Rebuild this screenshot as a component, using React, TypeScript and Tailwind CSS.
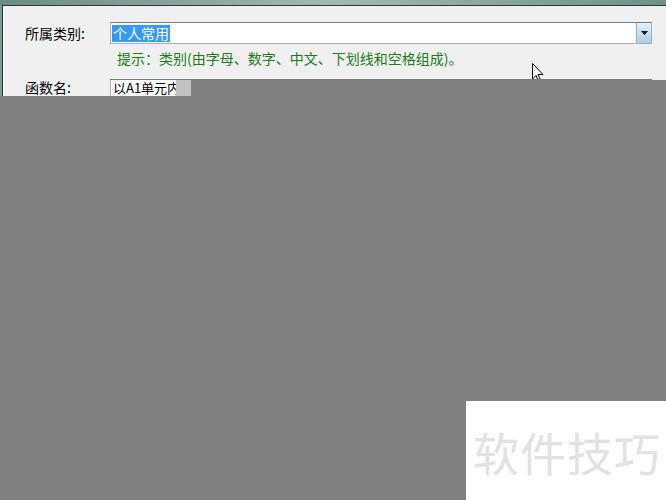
const cjk = { fontFamily: '"Noto Sans CJK SC", "Noto Sans", sans-serif' }

// mouse pointer, partly hidden behind the masked area below
function Pointer() {
  return (
    <svg width="12" height="19" viewBox="0 0 12 19" className="absolute left-[529px] top-[19px]">
      <path d="M0.5 0.5 L0.5 16 L4 12.5 L6.5 18 L8.5 17 L6 11.5 L11 11.5 Z" fill="#fff" stroke="#000" strokeWidth="1" />
    </svg>
  )
}

function ComboBox({ value }: { value: string }) {
  return (
    <div className="flex h-[22px] flex-1 mr-[14px] border border-[#abadb3] border-t-[#7a7a7a] bg-white">
      <div className="flex flex-1 items-center pl-[1px]">
        <span className="bg-[#3399ff] px-[1px] text-[14px] leading-[17px] text-white">{value}</span>
      </div>
      <div className="flex w-[15px] items-center justify-center border-l border-[#8fb2d0] bg-gradient-to-b from-[#e4f0fa] to-[#a9cde9]">
        <svg width="7" height="4" viewBox="0 0 7 4">
          <path d="M0 0 H7 L3.5 4 Z" fill="#000" />
        </svg>
      </div>
    </div>
  )
}

export default function App() {
  return (
    <div className="flex h-[500px] w-[666px] flex-col overflow-hidden bg-[#808080]" style={cjk}>
      <div className="h-[5px] bg-gradient-to-r from-[#6d8a86] via-[#a3b8b3] to-[#6f9189]" />
      <div className="flex">
        <div className="w-[2px] bg-[#7d9894]" />
        <div className="flex-1 border-l border-t border-[#2c3a38] bg-[#f0f0f0] text-[14px] text-black">
          <div className="mt-[16px] flex items-center">
            <div className="w-[107px] pl-[22px] leading-[16px]">所属类别:</div>
            <ComboBox value="个人常用" />
          </div>

          <div className="relative overflow-hidden pl-[114px] pt-[6px] pb-[13px] leading-[16px] text-[#217a21]">
            提示：类别(由字母、数字、中文、下划线和空格组成)。
            <Pointer />
          </div>

          <div className="flex h-[17px]">
            <div className="w-[107px] pl-[22px] leading-[17px]">函数名:</div>
            <div className="flex flex-1 flex-col">
              <div className="mr-[14px] h-px bg-[#7a7a7a]" />
              <div className="flex flex-1">
                <div className="w-[66px] overflow-hidden whitespace-nowrap border-l border-[#abadb3] bg-white pl-[2px] text-[13px] leading-[16px]">
                  以A1单元内
                </div>
                <div className="w-[15px] bg-[#c2c2c2]" />
                <div className="flex-1 bg-[#808080]" />
              </div>
            </div>
          </div>
        </div>
      </div>

      <div className="flex flex-1 items-end justify-end">
        <div className="flex h-[99px] w-[200px] items-center bg-white pl-[7px]">
          <span className="text-[46px] leading-none tracking-[1px] text-[#e2e2e2]">软件技巧</span>
        </div>
      </div>
    </div>
  )
}
